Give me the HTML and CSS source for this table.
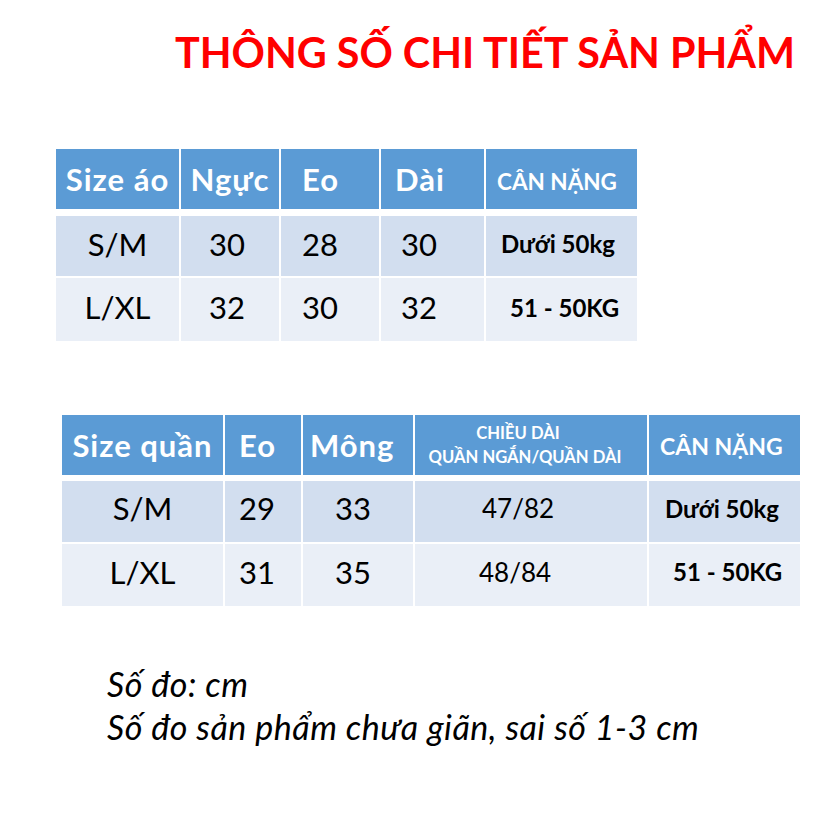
FILE: index.html
```html
<!DOCTYPE html>
<html lang="vi">
<head>
<meta charset="utf-8">
<link rel="stylesheet" href="styles.css">
</head>
<body>
<div class="page">
  <h1 class="title">THÔNG SỐ CHI TIẾT SẢN PHẨM</h1>

  <div class="tbl tbl-shirt">
    <div class="cell head c-center">Size áo</div>
    <div class="cell head c-center">Ngực</div>
    <div class="cell head pl21">Eo</div>
    <div class="cell head pl14">Dài</div>
    <div class="cell head pl11 head-sm">CÂN NẶNG</div>

    <div class="cell body odd c-center">S/M</div>
    <div class="cell body odd c-center pr6">30</div>
    <div class="cell body odd pl21">28</div>
    <div class="cell body odd pl20">30</div>
    <div class="cell body odd pl15 bold-sm">Dưới 50kg</div>

    <div class="cell body even c-center">L/XL</div>
    <div class="cell body even c-center pr6">32</div>
    <div class="cell body even pl21">30</div>
    <div class="cell body even pl20">32</div>
    <div class="cell body even pl24 bold-sm">51 - 50KG</div>
  </div>

  <div class="tbl tbl-pants">
    <div class="cell head c-center">Size quần</div>
    <div class="cell head pl14">Eo</div>
    <div class="cell head pl7">Mông</div>
    <div class="cell head c-center head-xs"><span class="l1">CHIỀU DÀI</span><span>QUẦN NGẮN/QUẦN DÀI</span></div>
    <div class="cell head pl11 head-sm2">CÂN NẶNG</div>

    <div class="cell body odd c-center">S/M</div>
    <div class="cell body odd pl14">29</div>
    <div class="cell body odd pl32">33</div>
    <div class="cell body odd pl67 mid">47/82</div>
    <div class="cell body odd pl16 bold-sm">Dưới 50kg</div>

    <div class="cell body even c-center">L/XL</div>
    <div class="cell body even pl14">31</div>
    <div class="cell body even pl32">35</div>
    <div class="cell body even pl64 mid">48/84</div>
    <div class="cell body even pl24 bold-sm">51 - 50KG</div>
  </div>

  <div class="notes">
    <p>Số đo: cm</p>
    <p>Số đo sản phẩm chưa giãn, sai số 1-3 cm</p>
  </div>
</div>
</body>
</html>
```

FILE: styles.css
```css
* { box-sizing: border-box; }
html, body { margin: 0; padding: 0; background: #ffffff; }
body { font-family: Lato, "Noto Sans", sans-serif; color: #000; }
.page { width: 829px; height: 827px; overflow: hidden; }

.title {
  margin: 0;
  padding: 28px 0 0 175px;
  height: 80px;
  font-size: 41.3px;
  line-height: 48px;
  font-weight: 700;
  color: #ff0000;
  white-space: nowrap;
}

.tbl {
  display: grid;
  column-gap: 2px;
  row-gap: 2px;
}
.tbl-shirt {
  margin: 69px 0 0 56px;
  grid-template-columns: 123px 98px 98px 103px 151px;
  grid-template-rows: 65px 60px 63px;
}
.tbl-pants {
  margin: 74px 0 0 62px;
  grid-template-columns: 161px 76px 110px 232px 151px;
  grid-template-rows: 64px 61px 62px;
}

.cell {
  display: flex;
  align-items: center;
  font-size: 31px;
  white-space: nowrap;
}
.head {
  height: 60px;
  align-self: start;
  background: #5b9bd5;
  color: #ffffff;
  font-weight: 700;
  font-size: 31px;
  letter-spacing: 1px;
}
.tbl-shirt .body { padding-bottom: 5px; }
.tbl-pants .body { padding-bottom: 7px; }
.odd { background: #d2deef; }
.even { background: #eaeff7; }

.c-center { justify-content: center; }
.pr6 { padding-right: 6px; }
.pl7 { padding-left: 7px; }
.pl11 { padding-left: 11px; }
.pl14 { padding-left: 14px; }
.pl15 { padding-left: 15px; }
.pl16 { padding-left: 16px; }
.pl20 { padding-left: 20px; }
.pl21 { padding-left: 21px; }
.pl24 { padding-left: 24px; }
.pl32 { padding-left: 32px; }
.pl64 { padding-left: 64px; }
.pl67 { padding-left: 67px; }

.head-sm { font-size: 22.5px; letter-spacing: 0; padding-top: 4px; }
.head-sm2 { font-size: 23px; letter-spacing: 0; padding-top: 2px; }
.head-xs {
  flex-direction: column;
  font-size: 16.6px;
  letter-spacing: 0;
  line-height: 24px;
  padding-right: 12px;
}
.head-xs .l1 { margin-right: 14px; }
.bold-sm { font-weight: 700; font-size: 24px; }
.mid { font-size: 26px; }

.notes {
  margin: 56px 0 0 107px;
  font-style: italic;
  font-size: 34px;
  letter-spacing: 0.5px;
}
.notes p { margin: 0; line-height: 43px; white-space: nowrap; }
```
